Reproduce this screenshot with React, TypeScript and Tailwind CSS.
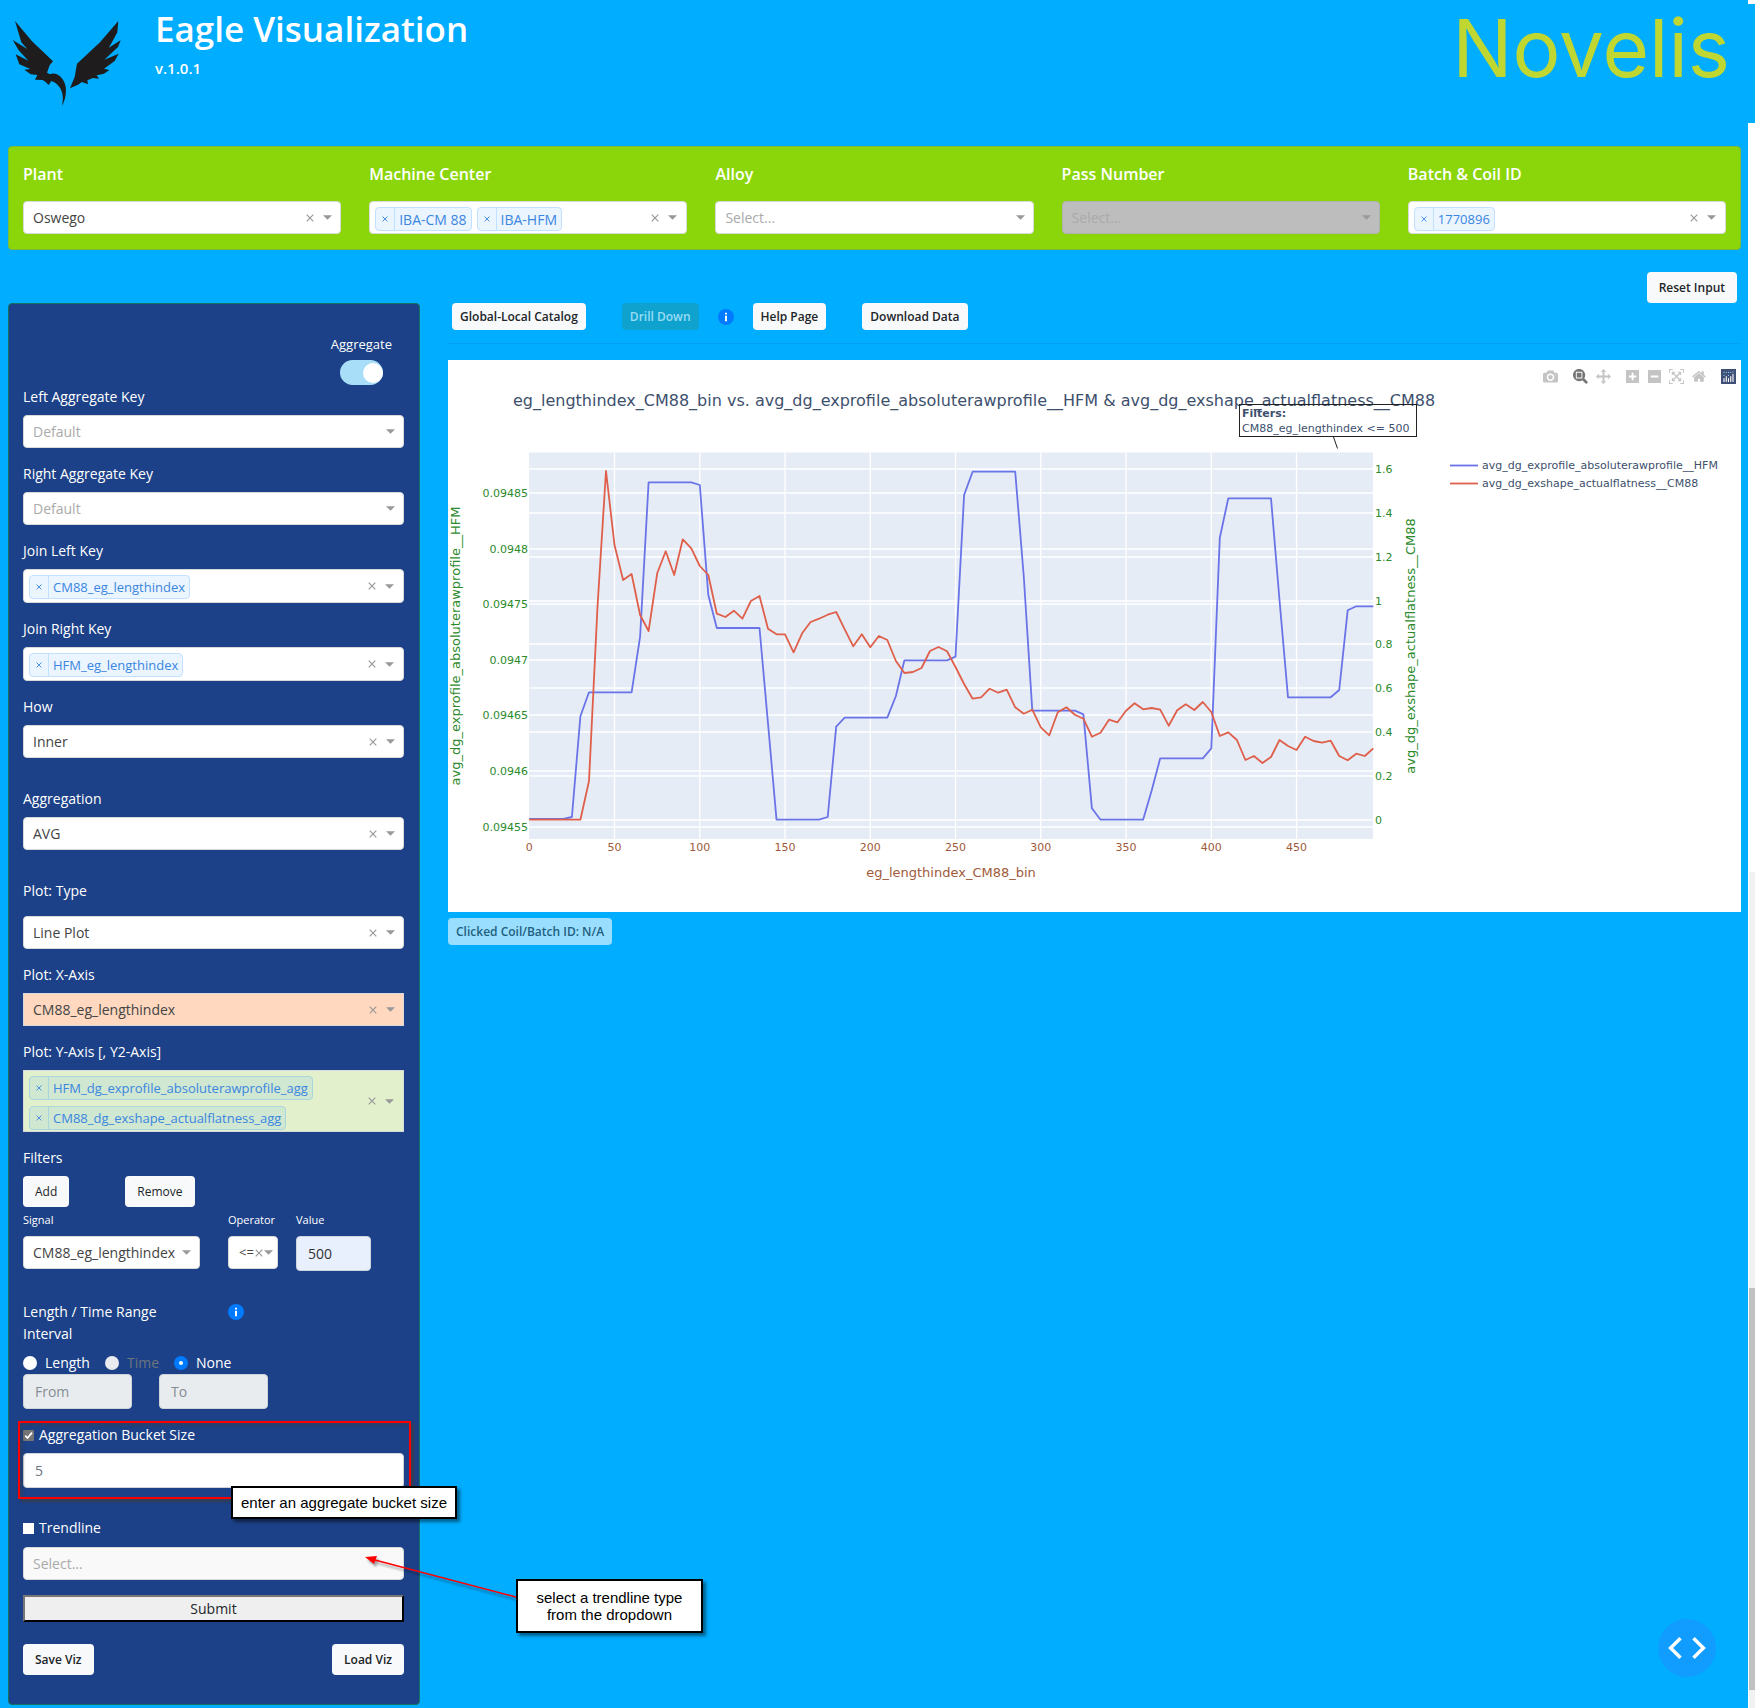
import React, { useId, useState } from "react";

const ui = "font-['Open_Sans','Noto_Sans',sans-serif]";

function Caret() {
  return (
    <svg viewBox="0 0 10 5" className="h-[5px] w-[9px]" aria-hidden="true">
      <path d="M0 0H10L5 5Z" fill="#999" />
    </svg>
  );
}

function Cross({ className }: { className: string }) {
  return (
    <svg viewBox="0 0 8 8" className={className} fill="none" stroke="currentColor" strokeWidth="1.2" aria-hidden="true">
      <path d="M0.7 0.7L7.3 7.3M7.3 0.7L0.7 7.3" />
    </svg>
  );
}

function Info() {
  return (
    <svg viewBox="0 0 16 16" className="h-4 w-4 shrink-0" role="img" aria-label="Information">
      <circle cx="8" cy="8" r="8" fill="#007bff" />
      <path d="M7 3.8h2v1.8H7zM7 6.8h2v5.4H7z" fill="#fff" />
    </svg>
  );
}

type SelectProps = {
  id: string;
  value: string;
  name?: string;
  placeholder?: boolean;
  clearable?: boolean;
  disabled?: boolean;
  tone?: string;
  pad?: string;
  icons?: string;
  caret?: boolean;
};

function Select({
  id,
  value,
  name,
  placeholder,
  clearable,
  disabled,
  tone = "rounded bg-white border-[#d9d9d9]",
  pad = "pl-[9px] pr-10 text-sm",
  icons = "right-[9px] gap-[9px]",
  caret = true,
}: SelectProps) {
  return (
    <div className="relative">
      <select
        id={id}
        aria-label={name}
        disabled={disabled}
        defaultValue={value}
        className={`block h-[33px] w-full appearance-none border opacity-100 ${tone} ${pad} ${placeholder ? "text-[#aaa]" : "text-[#444]"}`}
      >
        <option>{value}</option>
      </select>
      <div className={`pointer-events-none absolute inset-y-0 flex items-center text-[#999] ${icons}`}>
        {clearable && <Cross className="h-2 w-2" />}
        {caret && <Caret />}
      </div>
    </div>
  );
}

type MultiProps = { id: string; tags: string[]; tone?: string; tagTone?: string };

function MultiSelect({
  id,
  tags,
  tone = "min-h-[34px] rounded bg-white border-[#d9d9d9]",
  tagTone = "border-[#c2e0ff] bg-[#ebf5ff] text-[13px]",
}: MultiProps) {
  const [items, setItems] = useState(tags);
  return (
    <div className={`relative flex flex-wrap content-start gap-x-[5px] gap-y-[6px] border pb-px pl-[5px] pr-10 pt-[5px] ${tone}`}>
      {items.map((t) => (
        <span key={t} className={`flex h-6 items-stretch rounded-sm border text-[#3a86e0] ${tagTone}`}>
          <button
            type="button"
            aria-label={`Remove ${t}`}
            onClick={() => setItems(items.filter((i) => i !== t))}
            className="flex w-[19px] items-center justify-center border-r border-inherit"
          >
            <Cross className="h-[6px] w-[6px]" />
          </button>
          <span className="px-1 leading-[23px]">{t}</span>
        </span>
      ))}
      <input id={id} role="combobox" aria-expanded="false" aria-controls={id} className="h-6 w-1 bg-transparent outline-none" />
      <div className="pointer-events-none absolute inset-y-0 right-[9px] flex items-center gap-[9px] text-[#999]">
        <Cross className="h-2 w-2" />
        <Caret />
      </div>
    </div>
  );
}

function Field({ label, children, gap = "mb-[7px]" }: { label: string; children: (id: string) => React.ReactNode; gap?: string }) {
  const id = useId();
  return (
    <div>
      <label htmlFor={id} className={`block text-sm leading-[22px] text-white ${gap}`}>
        {label}
      </label>
      {children(id)}
    </div>
  );
}

function TopField({ label, children }: { label: string; children: (id: string) => React.ReactNode }) {
  const id = useId();
  return (
    <div className="min-w-0">
      <label htmlFor={id} className="mb-4 block text-base font-semibold leading-[22px] text-white">
        {label}
      </label>
      {children(id)}
    </div>
  );
}

const topTone = "min-h-[33px] rounded bg-white border-[#d9d9d9]";
const bigTag = "border-[#c2e0ff] bg-[#ebf5ff] text-sm";

function Eagle() {
  return (
    <svg viewBox="30 55 336 264" className="h-[88px] w-28" role="img" aria-label="Eagle">
      <g fill="#1f1c1d">
        <path d="M45 64L96 125L159 185L149 197L141 219L150 224C160 219 172 222 180 230C194 243 201 262 197 285C195 299 190 312 186 318C190 300 190 284 181 266C174 254 164 247 154 244L146 256L136 246L128 241L105 240L112 226L92 224L73 210L91 208L58 194L47 164L85 183L56 152L38 121L82 148L64 128Z" />
        <path d="M355 64L352 98L336 128L326 144L362 122L354 142L313 180L356 162L344 184L312 207L328 211L312 222L290 227L297 237L279 235L262 242L264 254L246 247L234 255L210 266L224 232L231 192L300 128Z" />
      </g>
    </svg>
  );
}

const every = 5;
const blue: number[] = [
  1137, 1137, 1137, 1137, 1137, 1131, 829, 757, 757, 757, 757, 757, 757, 590, 127, 127, 127, 127, 127, 127, 135, 465,
  564, 564, 564, 564, 564, 564, 850, 1139, 1139, 1139, 1139, 1139, 1139, 1131, 860, 833, 833, 833, 833, 833, 833, 768,
  661, 661, 661, 661, 661, 661, 650, 165, 95, 95, 95, 95, 95, 95, 410, 812, 812, 812, 812, 812, 812, 823, 1105, 1139,
  1139, 1139, 1139, 1139, 1139, 1052, 955, 955, 955, 955, 955, 955, 925, 293, 175, 175, 175, 175, 175, 175, 480, 772,
  772, 772, 772, 772, 772, 750, 511, 499, 499, 499,
];
const red: number[] = [
  1139, 1139, 1139, 1139, 1139, 1139, 1139, 1023, 500, 93, 315, 420, 402, 525, 573, 400, 334, 405, 298, 325, 378, 405,
  521, 531, 512, 536, 483, 468, 566, 583, 583, 637, 580, 546, 536, 524, 516, 568, 619, 583, 622, 588, 600, 663, 699,
  696, 684, 633, 621, 634, 681, 732, 776, 772, 746, 758, 749, 802, 821, 809, 862, 886, 817, 802, 824, 836, 890, 878,
  839, 847, 812, 790, 808, 804, 809, 857, 811, 793, 810, 786, 816, 888, 877, 900, 960, 948, 969, 951, 900, 918, 930,
  890, 903, 908, 902, 948, 961, 941, 948, 925,
];
const px = (v: number) => 529.3 + v * 1.705;
const trace = (d: number[]) => d.map((y, i) => `${px(i * every).toFixed(1)},${(440 + y / 3).toFixed(1)}`).join(" ");

const leftTicks: [string, number][] = [
  ["0.09485", 493], ["0.0948", 549], ["0.09475", 604], ["0.0947", 660], ["0.09465", 715], ["0.0946", 771], ["0.09455", 827],
];
const rightTicks: [string, number][] = [
  ["1.6", 469], ["1.4", 513], ["1.2", 557], ["1", 601], ["0.8", 644], ["0.6", 688], ["0.4", 732], ["0.2", 776], ["0", 820],
];

function Chart() {
  return (
    <svg viewBox="448 360 1293 552" className="block h-auto w-full font-['DejaVu_Sans',Verdana,sans-serif] text-[11px]" role="img" aria-label="Line plot">
      <rect x="529" y="452.5" width="844" height="386.5" fill="#e5ecf6" />
      <g stroke="#fff" strokeWidth="1.3">
        {[50, 100, 150, 200, 250, 300, 350, 400, 450].map((v) => (
          <line key={v} x1={px(v)} x2={px(v)} y1="452.5" y2="839" />
        ))}
        {leftTicks.map(([t, y]) => (
          <line key={t} x1="529" x2="1373" y1={y} y2={y} />
        ))}
        {rightTicks.map(([t, y]) => (
          <line key={t} x1="529" x2="1373" y1={y} y2={y} />
        ))}
      </g>
      <g fill="none" strokeWidth="1.8" strokeLinejoin="round">
        <polyline points={trace(blue)} stroke="#6a74e8" />
        <polyline points={trace(red)} stroke="#df5f4a" />
        <path d="M1450 465.5H1478" stroke="#6a74e8" />
        <path d="M1450 483.5H1478" stroke="#df5f4a" />
      </g>
      <g fill="#2c8a2c">
        {leftTicks.map(([t, y]) => (
          <text key={t} x="528" y={y + 4} textAnchor="end">{t}</text>
        ))}
        {rightTicks.map(([t, y]) => (
          <text key={t} x="1375" y={y + 4}>{t}</text>
        ))}
        <text transform="translate(460 646) rotate(-90)" textAnchor="middle" className="text-[13px]">avg_dg_exprofile_absoluterawprofile__HFM</text>
        <text transform="translate(1415 646) rotate(-90)" textAnchor="middle" className="text-[13px]">avg_dg_exshape_actualflatness__CM88</text>
      </g>
      <g fill="#a05a3a" textAnchor="middle">
        {[0, 50, 100, 150, 200, 250, 300, 350, 400, 450].map((v) => (
          <text key={v} x={px(v)} y="851">{v}</text>
        ))}
        <text x="951" y="877" className="text-[13px]">eg_lengthindex_CM88_bin</text>
      </g>
      <g fill="#3d506d">
        <text x="513" y="406" className="text-[16px]">eg_lengthindex_CM88_bin vs. avg_dg_exprofile_absoluterawprofile__HFM &amp; avg_dg_exshape_actualflatness__CM88</text>
        <text x="1482" y="469">avg_dg_exprofile_absoluterawprofile__HFM</text>
        <text x="1482" y="487">avg_dg_exshape_actualflatness__CM88</text>
        <text x="1242" y="417" className="font-bold">Filters:</text>
        <text x="1242" y="432">CM88_eg_lengthindex &lt;= 500</text>
      </g>
      <g fill="none" stroke="#222">
        <rect x="1239.5" y="404.5" width="177" height="32" />
        <path d="M1333.5 437L1337.5 448.5" />
      </g>
    </svg>
  );
}

const modes: { name: string; box: string; d: string; space: string; tone: string }[] = [
  { name: "Download plot", box: "0 0 1000 1000", space: "", tone: "text-[#c4c4c4]", d: "m500 450c-83 0-150-67-150-150 0-83 67-150 150-150 83 0 150 67 150 150 0 83-67 150-150 150z m400 150h-120c-16 0-34 13-39 29l-31 93c-6 15-23 28-40 28h-340c-16 0-34-13-39-28l-31-94c-6-15-23-28-40-28h-120c-55 0-100-45-100-100v-450c0-55 45-100 100-100h800c55 0 100 45 100 100v450c0 55-45 100-100 100z m-400-550c-138 0-250 112-250 250 0 138 112 250 250 250 138 0 250-112 250-250 0-138-112-250-250-250z m365 380c-19 0-35 16-35 35 0 19 16 35 35 35 19 0 35-16 35-35 0-19-16-35-35-35z" },
  { name: "Zoom", box: "0 0 1000 1000", space: "ml-[15px]", tone: "text-[#757575]", d: "m1000-25l-250 251c40 63 63 138 63 218 0 224-182 406-407 406-224 0-406-182-406-406s183-406 407-406c80 0 155 22 218 62l250-250 125 125z m-812 250l0 438 437 0 0-438-437 0z m62 375l313 0 0-312-313 0 0 312z" },
  { name: "Pan", box: "0 0 1000 1000", space: "ml-2", tone: "text-[#c4c4c4]", d: "m1000 350l-187 188 0-125-250 0 0 250 125 0-188 187-187-187 125 0 0-250-250 0 0 125-188-188 186-187 0 125 252 0 0-250-125 0 187-188 188 188-125 0 0 250 250 0 0-126 187 188z" },
  { name: "Zoom in", box: "0 0 875 1000", space: "ml-[15px]", tone: "text-[#c4c4c4]", d: "m1 787l0-875 875 0 0 875-875 0z m687-500l-187 0 0-187-125 0 0 187-188 0 0 125 188 0 0 187 125 0 0-187 187 0 0-125z" },
  { name: "Zoom out", box: "0 0 875 1000", space: "ml-[9px]", tone: "text-[#c4c4c4]", d: "m0 788l0-876 875 0 0 876-875 0z m688-500l-500 0 0 125 500 0 0-125z" },
  { name: "Autoscale", box: "0 0 1000 1000", space: "ml-2", tone: "text-[#c4c4c4]", d: "m250 850l-187 0-63 0 0-62 0-188 63 0 0 188 187 0 0 62z m688 0l-188 0 0-62 188 0 0-188 62 0 0 188 0 62-62 0z m-875-938l0 188-63 0 0-188 0-62 63 0 187 0 0 62-187 0z m875 188l0-188-188 0 0-62 188 0 62 0 0 62 0 188-62 0z m-125 188l-1 0-93-94-156 156 156 156 92-93 2 0 0 250-250 0 0-2 93-92-156-156-156 156 94 92 0 2-250 0 0-250 0 0 93 93 157-156-157-156-93 94 0 0 0-250 250 0 0 0-94 93 156 157 156-157-93-93 0 0 250 0 0 250z" },
  { name: "Reset axes", box: "0 0 929 1000", space: "ml-2", tone: "text-[#c4c4c4]", d: "m786 296v-267q0-15-11-26t-25-10h-214v214h-143v-214h-214q-15 0-25 10t-11 26v267q0 1 0 2t0 2l321 264 321-264q1-1 1-4z m124 39l-34-41q-5-5-12-6h-2q-7 0-12 3l-386 322-386-322q-7-4-13-4-7 2-12 7l-35 41q-4 5-3 13t6 12l401 334q18 15 42 15t43-15l136-114v109q0 8 5 13t13 5h107q8 0 13-5t5-13v-227l122-102q5-5 6-12t-4-13z" },
];

function ModeBar() {
  return (
    <div className="absolute right-[5px] top-[9px] flex items-center">
      {modes.map((m) => (
        <button key={m.name} type="button" aria-label={m.name} className={`${m.space} ${m.tone}`}>
          <svg viewBox={m.box} className="h-[15px] w-auto" fill="currentColor">
            <path transform="matrix(1 0 0 -1 0 850)" d={m.d} />
          </svg>
        </button>
      ))}
      <button type="button" aria-label="Plotly" className="ml-[15px]">
        <svg viewBox="0 0 15 15" className="h-[15px] w-[15px]">
          <rect width="15" height="15" fill="#3f4f75" />
          <path d="M3 9.5v3M5.25 7.5v5M7.5 9.5v3M9.75 7.5v5M12 5.2v7.3" stroke="#fff" strokeWidth="1.1" strokeLinecap="round" />
          <path d="M3 6.4v.1M3 3.4v.1M5.25 3.4v.1M7.5 6.4v.1M7.5 3.4v.1M9.75 3.4v.1M12 2.9v.1" stroke="#8fd3ee" strokeWidth="1.1" strokeLinecap="round" />
        </svg>
      </button>
    </div>
  );
}

function SmallButton({ children, className = "bg-[#f8f9fa] text-[#212529]" }: { children: string; className?: string }) {
  return (
    <button type="button" className={`h-[27px] rounded px-2 text-xs font-semibold ${className}`}>
      {children}
    </button>
  );
}

function PanelButton({ children, className = "font-semibold" }: { children: string; className?: string }) {
  return (
    <button type="button" className={`h-[31px] rounded bg-[#f8f9fa] px-3 text-xs text-[#212529] ${className}`}>
      {children}
    </button>
  );
}

const callout = "absolute border-2 border-black bg-white text-center font-['Liberation_Sans',Arial,sans-serif] text-[15px] leading-[17px] text-black shadow-[3px_3px_3px_rgba(0,0,0,0.45)]";

function Sidebar() {
  const [bucket, setBucket] = useState(true);
  return (
    <aside className="relative w-[412px] shrink-0 rounded border border-[#14705f] bg-[#1c4188] pb-[29px] pl-[14px] pr-[15px] pt-[30px]">
      <div className="flex justify-end pr-3">
        <label className="flex flex-col items-center text-[13px] leading-5 text-white">
          Aggregate
          <input type="checkbox" role="switch" defaultChecked className="peer sr-only" />
          <span className="mb-px mt-[6px] flex h-[25px] w-[43px] items-center justify-end rounded-full bg-[#a9def9]">
            <span className="h-5 w-5 rounded-full bg-white" />
          </span>
        </label>
      </div>

      <div className="flex flex-col gap-[15px]">
        <Field label="Left Aggregate Key">{(id) => <Select id={id} value="Default" placeholder />}</Field>
        <Field label="Right Aggregate Key">{(id) => <Select id={id} value="Default" placeholder />}</Field>
        <Field label="Join Left Key">{(id) => <MultiSelect id={id} tags={["CM88_eg_lengthindex"]} />}</Field>
        <Field label="Join Right Key">{(id) => <MultiSelect id={id} tags={["HFM_eg_lengthindex"]} />}</Field>
        <Field label="How">{(id) => <Select id={id} value="Inner" clearable />}</Field>
        <div className="mt-[15px]">
          <Field label="Aggregation">{(id) => <Select id={id} value="AVG" clearable />}</Field>
        </div>
        <div className="mt-[15px]">
          <Field label="Plot: Type" gap="mb-[14px]">{(id) => <Select id={id} value="Line Plot" clearable />}</Field>
        </div>
        <Field label="Plot: X-Axis">
          {(id) => <Select id={id} value="CM88_eg_lengthindex" clearable tone="bg-[#ffd8bf] border-[#d9d9d9]" />}
        </Field>
        <Field label="Plot: Y-Axis [, Y2-Axis]">
          {(id) => (
            <MultiSelect
              id={id}
              tags={["HFM_dg_exprofile_absoluterawprofile_agg", "CM88_dg_exshape_actualflatness_agg"]}
              tone="min-h-[33px] bg-[#e2f0cb] border-[#d9d9d9]"
              tagTone="border-[#a9d5dc] bg-[#d0e7d2] text-[13px]"
            />
          )}
        </Field>
      </div>

      <h2 className="mb-[7px] mt-[15px] text-sm leading-[22px] text-white">Filters</h2>
      <div className="flex gap-14">
        <PanelButton className="font-normal">Add</PanelButton>
        <PanelButton className="font-normal">Remove</PanelButton>
      </div>

      <div className="mt-1 flex items-start text-xs text-white">
        <div className="w-[177px]">
          <label htmlFor="signal" className="mb-[7px] block text-[11px] leading-[18px]">Signal</label>
          <Select id="signal" value="CM88_eg_lengthindex" pad="pl-[9px] pr-4 text-sm" />
        </div>
        <div className="ml-7 w-[50px]">
          <label htmlFor="operator" className="mb-[7px] block text-[11px] leading-[18px]">Operator</label>
          <Select id="operator" value="<=" clearable pad="pl-[10px] text-[13px]" icons="right-[5px] gap-px" />
        </div>
        <div className="ml-[18px] w-[75px]">
          <label htmlFor="value" className="mb-[7px] block text-[11px] leading-[18px]">Value</label>
          <input id="value" defaultValue="500" className="block h-[35px] w-full rounded border border-[#ced4da] bg-[#e8f0fe] px-[11px] text-sm text-[#333]" />
        </div>
      </div>

      <fieldset className="mt-[30px] text-sm text-white">
        <div className="flex gap-[45px]">
          <legend className="w-40 leading-[22px]">Length / Time Range Interval</legend>
          <span className="pt-[3px]"><Info /></span>
        </div>
        <div className="mt-[7px] flex h-[22px] items-center">
          <label className="flex items-center gap-2">
            <input type="radio" name="interval" className="h-[14px] w-[14px] appearance-none rounded-full bg-white" />
            Length
          </label>
          <label className="ml-[15px] flex items-center gap-2 text-[#6c757d]">
            <input type="radio" name="interval" disabled className="h-[14px] w-[14px] appearance-none rounded-full bg-[#e9ecef]" />
            Time
          </label>
          <label className="ml-[15px] flex items-center gap-2">
            <input type="radio" name="interval" defaultChecked className="h-[14px] w-[14px] appearance-none rounded-full border-[5px] border-[#007bff] bg-white" />
            None
          </label>
        </div>
        <div className="flex gap-[27px]">
          <input aria-label="From" placeholder="From" disabled className="h-[35px] w-[109px] rounded border border-[#ced4da] bg-[#e9ecef] px-[11px] placeholder:text-[#858c93]" />
          <input aria-label="To" placeholder="To" disabled className="h-[35px] w-[109px] rounded border border-[#ced4da] bg-[#e9ecef] px-[11px] placeholder:text-[#858c93]" />
        </div>
      </fieldset>

      <div className="relative mt-[15px]">
        <label className="flex items-center gap-[5px] text-sm leading-[22px] text-white">
          <input type="checkbox" checked={bucket} onChange={(e) => setBucket(e.target.checked)} className="peer sr-only" />
          <svg viewBox="0 0 11 11" className="h-[11px] w-[11px]" aria-hidden="true">
            <rect width="11" height="11" rx="1" fill={bucket ? "#767676" : "#fff"} />
            {bucket && <path d="M2.2 5.6L4.5 8L9 2.6" fill="none" stroke="#fff" strokeWidth="1.7" />}
          </svg>
          Aggregation Bucket Size
        </label>
        <input aria-label="Bucket size" defaultValue="5" className="mt-[7px] block h-[35px] w-full rounded border border-[#ced4da] bg-white px-[11px] text-sm text-[#6c757d]" />
        <div className="pointer-events-none absolute -bottom-[11px] -left-[5px] -right-[7px] -top-[3px] border-2 border-[#ff0000] shadow-[3px_3px_3px_rgba(60,60,60,0.7),inset_3px_3px_3px_rgba(60,60,60,0.35)]" />
        <div className={`${callout} left-52 top-[62px] z-10 whitespace-nowrap px-2 py-[6px]`}>enter an aggregate bucket size</div>
      </div>

      <div className="relative mt-[29px]">
        <label className="mb-2 flex items-center gap-[5px] text-sm leading-[22px] text-white">
          <input type="checkbox" className="h-[11px] w-[11px] appearance-none bg-white" />
          Trendline
        </label>
        <Select id="trend" name="Trendline type" value="Select..." placeholder disabled caret={false} tone="rounded bg-[#f9f9f9] border-[#d9d9d9]" />
        <svg viewBox="0 0 152 46" className="pointer-events-none absolute left-[342px] top-[38px] z-10 h-[46px] w-[152px] drop-shadow-[2px_3px_1px_rgba(0,0,0,0.35)]" aria-hidden="true">
          <path d="M8 4.5L151 42" stroke="#f00" strokeWidth="1.5" />
          <path d="M0 2L12 1L9 9Z" fill="#f00" />
        </svg>
        <div className={`${callout} left-[493px] top-[62px] w-[187px] px-4 py-[8px]`}>select a trendline type from the dropdown</div>
      </div>

      <button type="button" className="mt-[15px] block h-[27px] w-full border-2 border-b-black border-l-[#767676] border-r-black border-t-[#767676] bg-[#efefef] text-sm leading-[22px] text-[#212529]">
        Submit
      </button>
      <div className="mt-[22px] flex justify-between">
        <PanelButton>Save Viz</PanelButton>
        <PanelButton>Load Viz</PanelButton>
      </div>
    </aside>
  );
}

export default function App() {
  return (
    <div className={`relative flex min-h-screen bg-[#00adff] ${ui}`}>
      <div className="min-w-0 flex-1 pb-[3px] pl-2 pr-[7px]">
        <header className="flex h-[146px] items-start">
          <div className="w-[147px] pl-[2px] pt-[18px]">
            <Eagle />
          </div>
          <div className="pt-1 text-white">
            <h1 className="text-[35px] font-semibold leading-[50px]">Eagle Visualization</h1>
            <p className="text-[15px] font-semibold leading-7">v.1.0.1</p>
          </div>
          <div className="ml-auto pr-[11px] font-['Inter',sans-serif] text-[80px] font-normal leading-[96px] text-[#bfd730]">Novelis</div>
        </header>

        <section className="grid grid-cols-5 gap-7 rounded border border-[#7fb83a] bg-[#8bd60b] px-[14px] pb-[15px] pt-4">
          <TopField label="Plant">{(id) => <Select id={id} value="Oswego" clearable />}</TopField>
          <TopField label="Machine Center">{(id) => <MultiSelect id={id} tags={["IBA-CM 88", "IBA-HFM"]} tone={topTone} tagTone={bigTag} />}</TopField>
          <TopField label="Alloy">{(id) => <Select id={id} value="Select..." placeholder />}</TopField>
          <TopField label="Pass Number">
            {(id) => <Select id={id} value="Select..." placeholder disabled tone="rounded bg-[#bdbdbd] border-[#b0b0b0]" />}
          </TopField>
          <TopField label="Batch & Coil ID">{(id) => <MultiSelect id={id} tags={["1770896"]} tone={topTone} />}</TopField>
        </section>

        <div className="mt-[22px] flex justify-end pr-1">
          <PanelButton>Reset Input</PanelButton>
        </div>

        <div className="flex items-start gap-7">
          <Sidebar />
          <main className="min-w-0 flex-1">
            <div className="flex items-center pl-1">
              <SmallButton>Global-Local Catalog</SmallButton>
              <SmallButton className="ml-9 bg-[#0fa2cf] text-[#9adcf3]">Drill Down</SmallButton>
              <span className="ml-[19px] mr-[19px]"><Info /></span>
              <SmallButton>Help Page</SmallButton>
              <SmallButton className="ml-9 bg-[#f8f9fa] text-[#212529]">Download Data</SmallButton>
            </div>
            <hr className="mb-4 mt-[13px] border-[#00a3f2]" />
            <div className="relative bg-white">
              <Chart />
              <ModeBar />
            </div>
            <p className="mt-[6px] inline-block h-[27px] rounded bg-[#99deff] px-2 text-xs font-semibold leading-[27px] text-[#1f5f80]">
              Clicked Coil/Batch ID: N/A
            </p>
          </main>
        </div>
      </div>

      <div className="flex w-[7px] shrink-0 flex-col" aria-hidden="true">
        <div className="h-1 bg-white" />
        <div className="h-[119px]" />
        <div className="flex-1 bg-white" />
        <div className="h-[416px] border-l border-white bg-[#f1f1f1]" />
        <div className="h-[402px] border-l border-white bg-[#c1c1c1]" />
        <div className="h-[18px] border-l border-white bg-[#f1f1f1]" />
      </div>

      <button type="button" aria-label="Developer tools" className="absolute bottom-[31px] right-[39px] flex h-[58px] w-[58px] items-center justify-center rounded-full bg-[#119dff]">
        <svg viewBox="0 0 38 22" className="h-[22px] w-[38px]" fill="none" stroke="#fff" strokeWidth="3.4">
          <path d="M12.5 1.2L2.6 11L12.5 20.8M25.5 1.2L35.4 11L25.5 20.8" />
        </svg>
      </button>
    </div>
  );
}
